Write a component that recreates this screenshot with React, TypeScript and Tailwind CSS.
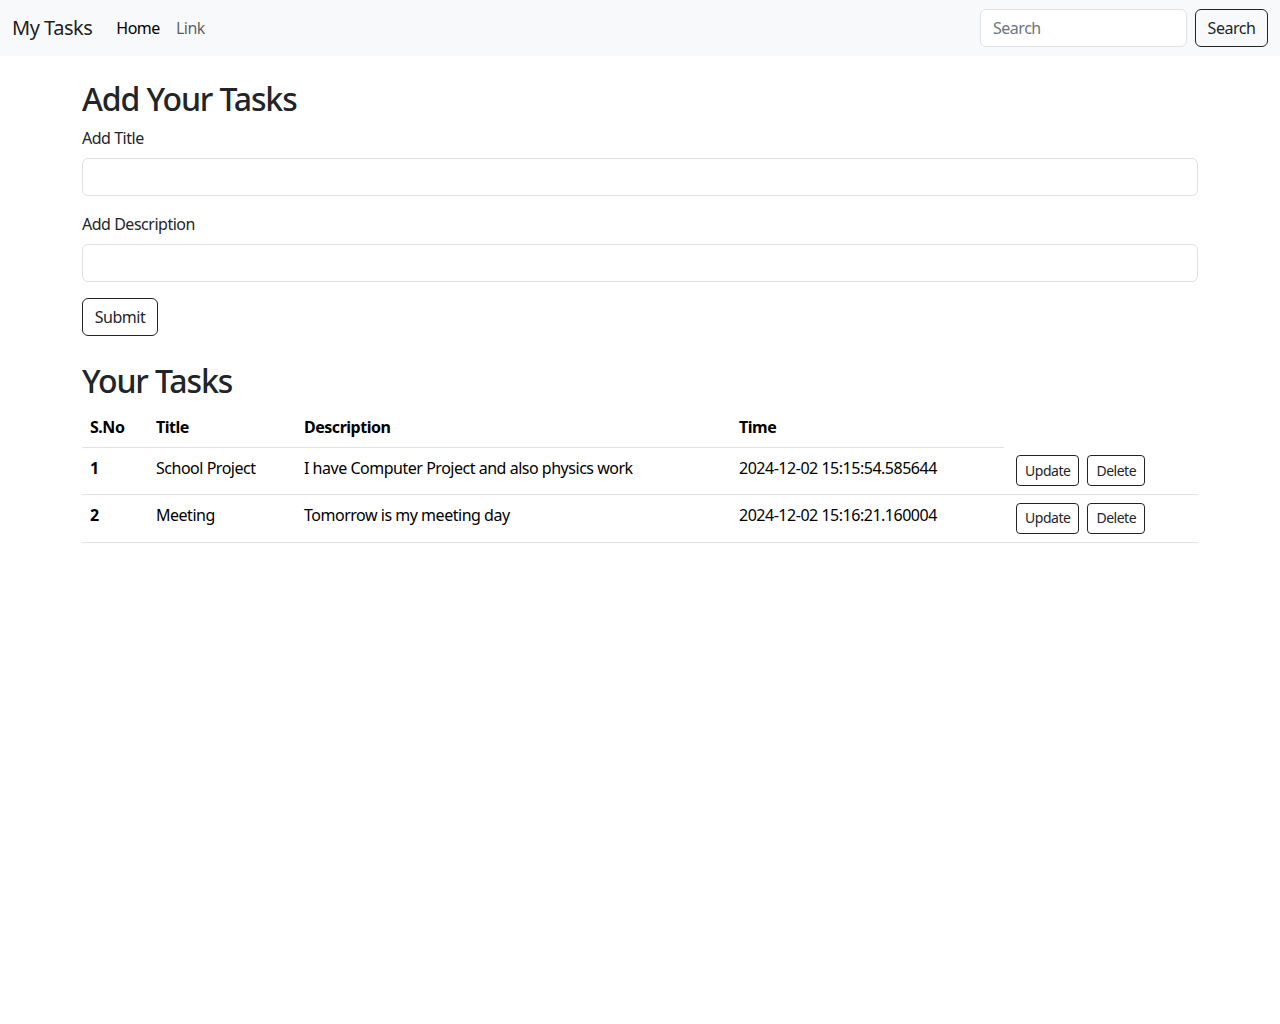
const tasks = [
  { id: 1, title: 'School Project', desc: 'I have Computer Project and also physics work', time: '2024-12-02 15:15:54.585644' },
  { id: 2, title: 'Meeting', desc: 'Tomorrow is my meeting day', time: '2024-12-02 15:16:21.160004' },
];

const font = { fontFamily: '"Noto Sans", "Open Sans", sans-serif' };

export default function App() {
  return (
    <div className="min-h-screen bg-white text-[#212529] text-base leading-6 tracking-[-0.03em]" style={font}>
      <nav className="h-14 bg-[#f8f9fa] flex items-center justify-between px-3">
        <div className="flex items-center">
          <a href="#" className="text-xl text-black/90 mr-4">My Tasks</a>
          <a href="#" className="px-2 text-black">Home</a>
          <a href="#" className="px-2 text-black/65">Link</a>
        </div>
        <form className="flex items-center" onSubmit={(e) => e.preventDefault()}>
          <input
            placeholder="Search"
            className="w-[207px] h-[38px] px-3 mr-2 bg-white border border-[#dee2e6] rounded-md placeholder-[#6c757d] outline-none"
          />
          <button className="h-[38px] w-[73px] border border-[#212529] rounded-md text-[#212529]">Search</button>
        </form>
      </nav>

      <div className="max-w-[1140px] mx-auto px-3 mt-6">
        <h2 className="text-[32px] leading-[38px] font-medium tracking-[-0.035em] mb-2">Add Your Tasks</h2>
        <form onSubmit={(e) => e.preventDefault()}>
          <div className="mb-4">
            <label className="block mb-2">Add Title</label>
            <input className="w-full h-[38px] px-3 border border-[#dee2e6] rounded-md outline-none" />
          </div>
          <div className="mb-4">
            <label className="block mb-2">Add Description</label>
            <input className="w-full h-[38px] px-3 border border-[#dee2e6] rounded-md outline-none" />
          </div>
          <button className="h-[38px] w-[76px] border border-[#212529] rounded-md">Submit</button>
        </form>

        <h2 className="text-[32px] leading-[38px] font-medium tracking-[-0.035em] mt-[26px] mb-[7px]">Your Tasks</h2>
        <table className="w-full table-fixed border-collapse text-black">
          <colgroup>
            <col className="w-[66px]" />
            <col className="w-[148px]" />
            <col className="w-[435px]" />
            <col className="w-[273px]" />
            <col />
          </colgroup>
          <thead>
            <tr>
              <th className="text-left font-bold p-2 border-b border-[#dee2e6]">S.No</th>
              <th className="text-left font-bold p-2 border-b border-[#dee2e6]">Title</th>
              <th className="text-left font-bold p-2 border-b border-[#dee2e6]">Description</th>
              <th className="text-left font-bold p-2 border-b border-[#dee2e6]">Time</th>
            </tr>
          </thead>
          <tbody>
            {tasks.map((t) => (
              <tr key={t.id} className="border-b border-[#dee2e6] align-top">
                <th className="text-left font-bold p-2">{t.id}</th>
                <td className="p-2">{t.title}</td>
                <td className="p-2">{t.desc}</td>
                <td className="p-2">{t.time}</td>
                <td className="px-2 pt-[7.5px] pb-2">
                  <div className="flex">
                    <button className="mx-1 h-[31px] px-2 text-sm border border-[#212529] rounded text-[#212529]">Update</button>
                    <button className="mx-1 h-[31px] px-2 text-sm border border-[#212529] rounded text-[#212529]">Delete</button>
                  </div>
                </td>
              </tr>
            ))}
          </tbody>
        </table>
      </div>
    </div>
  );
}
